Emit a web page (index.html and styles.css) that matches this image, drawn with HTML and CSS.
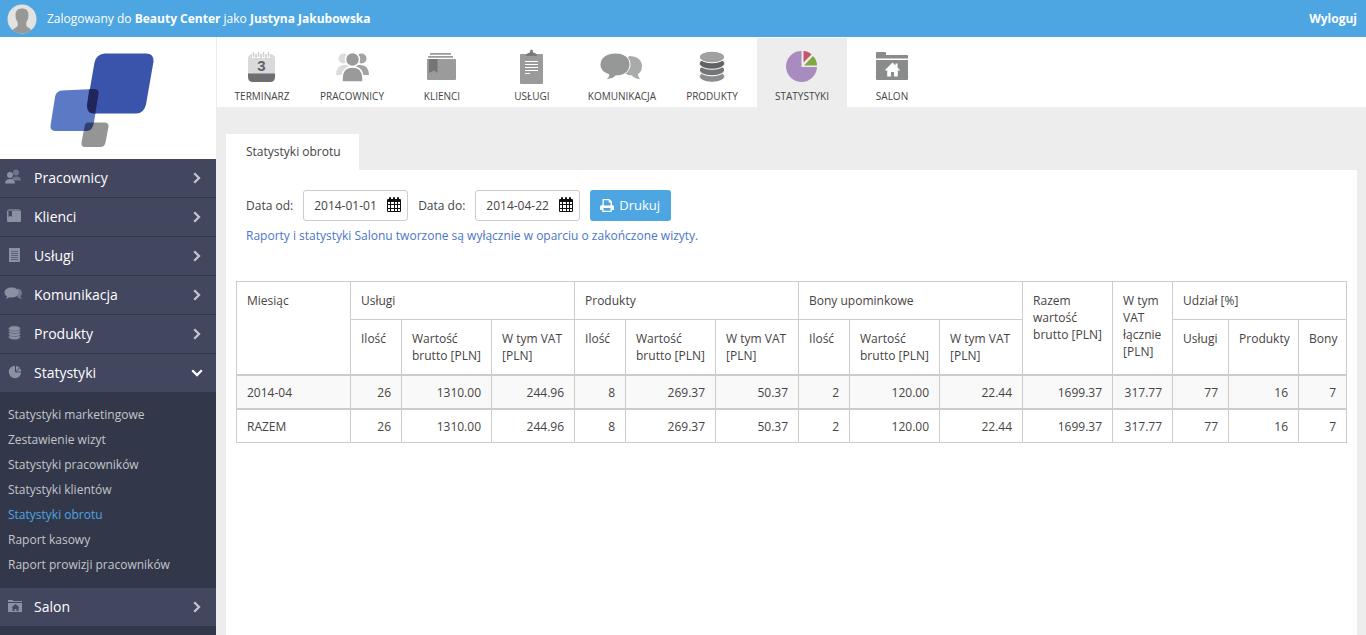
FILE: index.html
```html
<!DOCTYPE html>
<html lang="pl">
<head>
<meta charset="utf-8">
<title>Statystyki obrotu</title>
<link rel="stylesheet" href="styles.css">
</head>
<body>
<svg class="defs" aria-hidden="true">
  <symbol id="chev" viewBox="0 0 8 12"><path d="M1.2 1.2L6 6l-4.800 4.800" fill="none" stroke="currentColor" stroke-width="2.300"/></symbol>
  <symbol id="calendar" viewBox="0 0 14 15">
    <path fill="#111" d="M1 2h1v-1q0-1 1-1t1 1v1h2v-1q0-1 1-1t1 1v1h2v-1q0-1 1-1t1 1v1h1q1 0 1 1v11q0 1-1 1H1q-1 0-1-1V3q0-1 1-1z"/>
    <path fill="#fff" shape-rendering="crispEdges" d="M1 5h2v2H1zM4 5h3v2H4zM8 5h2v2H8zM11 5h2v2h-2zM1 8h2v3H1zM4 8h3v3H4zM8 8h2v3H8zM11 8h2v3h-2zM1 12h2v2H1zM4 12h3v2H4zM8 12h2v2H8zM11 12h2v2h-2z"/>
  </symbol>
</svg>

<header class="topbar">
  <svg class="avatar" viewBox="0 0 30 30" aria-hidden="true">
    <circle cx="15" cy="15" r="14.500" fill="#e2e2e0"/>
    <path fill="#989896" d="M15 4.500c4 0 6.500 2 6.500 6.500 0 3-.6 5-2.200 7v3.500c0 1.500 3 2.200 5.200 4.400A14.500 14.500 0 0 1 5.500 25.900c2.200-2.200 5.200-2.900 5.200-4.400V18c-1.600-2-2.200-4-2.200-7 0-4.500 2.500-6.500 6.500-6.500z"/>
  </svg>
  <p class="who">Zalogowany do <b>Beauty Center</b> jako <b>Justyna Jakubowska</b></p>
  <a class="logout" href="#">Wyloguj</a>
</header>

<div class="layout">
  <aside class="sidebar">
    <a class="logo" href="#" aria-label="Strona główna">
      <svg class="logo-mark" viewBox="0 0 104 96" aria-hidden="true">
        <path fill="#5c79c6" d="M12 37.500l32-1.500q5 0 4.500 5l-5 31q-1.500 6-7 6H6q-6 0-5.500-5L5 44q1-6 7-6.500z"/>
        <path fill="#3a54ab" d="M55 .5h41q8 0 7.500 8l-7.500 43q-2 9-10 9H44q-7 0-7-8l7.500-43Q46.500 1 55 .5z"/>
        <path fill="#20255c" d="M39.300 36.200L44 36q5 0 4.500 5l-3.200 19.500H44q-7 0-7-8z"/>
        <path fill="#959595" d="M38 69.500h16q5 0 4.500 4l-3 16q-1 4.500-5 4.500H35q-4 0-3.500-4.500l3-16q.7-4 3.500-4z"/>
        <path fill="#2e3f70" d="M38 69.500h6q-1.500 8.500-7.500 8.500h-2.700l.7-4.500q.7-4 3.500-4z"/>
      </svg>
    </a>
    <nav class="menu" aria-label="Menu boczne">
      <a class="menu-item" href="#">
        <svg class="menu-icon" viewBox="0 0 20 16"><g fill="#6f748a"><circle cx="14" cy="3.500" r="3"/><path d="M10 11.500q0-4 4.500-4 4.300 0 4.500 4z"/></g><g fill="#8b90a3"><circle cx="8" cy="6" r="3"/><path d="M3 14.500q.2-4.500 5-4.500t5 4.500z"/></g></svg>
        <span class="menu-label">Pracownicy</span><svg class="chev"><use href="#chev"/></svg></a>
      <a class="menu-item" href="#">
        <svg class="menu-icon" viewBox="0 0 20 16"><path fill="#6f748a" d="M5 2.500L7 1h10l2 1.500V4H5z"/><path fill="#8b90a3" d="M5 3h13q1 0 1 1v9q0 1-1 1H6q-1 0-1-1z"/><path fill="#42465e" d="M6.500 3H10v6L8.300 7.800 6.500 9z"/></svg>
        <span class="menu-label">Klienci</span><svg class="chev"><use href="#chev"/></svg></a>
      <a class="menu-item" href="#">
        <svg class="menu-icon" viewBox="0 0 20 16"><path fill="#8b90a3" d="M7 1h11v14H7z"/><path stroke="#5d627a" d="M9 4.500h7M9 6.500h7M9 8.500h7M9 10.500h7M9 12.500h7"/></svg>
        <span class="menu-label">Usługi</span><svg class="chev"><use href="#chev"/></svg></a>
      <a class="menu-item" href="#">
        <svg class="menu-icon" viewBox="0 0 20 16"><path fill="#747990" d="M15 2.500q5 .5 5 4.500 0 2-1.500 3.300l1.200 2.700-4-1.500z"/><path fill="#8b90a3" d="M9.500 1.500c4 0 7 2 7 5s-3 5-7 5l-2-.2L4 13l1-2.500C3.500 9.500 2.500 8 2.500 6.500c0-3 3-5 7-5z"/></svg>
        <span class="menu-label">Komunikacja</span><svg class="chev"><use href="#chev"/></svg></a>
      <a class="menu-item" href="#">
        <svg class="menu-icon" viewBox="0 0 20 16"><g fill="#8b90a3" stroke="#5d627a" stroke-width=".7"><ellipse cx="12.500" cy="12" rx="5.800" ry="2.600"/><ellipse cx="12.500" cy="9" rx="5.800" ry="2.600"/><ellipse cx="12.500" cy="6" rx="5.800" ry="2.600"/><ellipse cx="12.500" cy="3.500" rx="5.800" ry="2.600"/></g></svg>
        <span class="menu-label">Produkty</span><svg class="chev"><use href="#chev"/></svg></a>
      <a class="menu-item open" href="#" aria-expanded="true">
        <svg class="menu-icon" viewBox="0 0 20 16"><circle cx="13" cy="8" r="6.200" fill="#8b90a3"/><path stroke="#42465e" fill="none" d="M13.500 1v7H20M13.500 8L18 3.500"/></svg>
        <span class="menu-label">Statystyki</span><svg class="chev"><use href="#chev"/></svg></a>
      <ul class="submenu">
        <li><a href="#">Statystyki marketingowe</a></li>
        <li><a href="#">Zestawienie wizyt</a></li>
        <li><a href="#">Statystyki pracowników</a></li>
        <li><a href="#">Statystyki klientów</a></li>
        <li><a class="current" href="#" aria-current="page">Statystyki obrotu</a></li>
        <li><a href="#">Raport kasowy</a></li>
        <li><a href="#">Raport prowizji pracowników</a></li>
      </ul>
      <a class="menu-item" href="#">
        <svg class="menu-icon" viewBox="0 0 20 16"><path fill="#8b90a3" d="M6 2h5v1h9v1H6zM6 5h14v9H6z"/><path fill="#42465e" d="M13.500 6l4 3.500h-1V13h-2v-2h-2v2h-2V9.500h-1z"/></svg>
        <span class="menu-label">Salon</span><svg class="chev"><use href="#chev"/></svg></a>
    </nav>
  </aside>

  <div class="content">
    <nav class="modules" aria-label="Moduły">
      <a class="module" href="#">
        <svg class="module-icon" viewBox="0 0 44 38"><path fill="#dadada" d="M8 11q0-5 5-5h17q5 0 5 5v15H8z"/><path fill="#6d6f71" d="M8 25.500h27V29q0 5-5 5H13q-5 0-5-5z"/><path stroke="#fff" stroke-width="3" d="M13.500 4v6M18.500 4v6M23.500 4v6M28.500 4v6"/><path stroke="#d0d0d0" stroke-width="1.500" stroke-linecap="round" d="M13.500 4.500v4M18.500 4.500v4M23.500 4.500v4M28.500 4.500v4"/><text class="day" x="21.500" y="23" text-anchor="middle">3</text></svg>
        <span>TERMINARZ</span></a>
      <a class="module" href="#">
        <svg class="module-icon" viewBox="0 0 44 38"><g fill="#dcdcdc"><circle cx="13.500" cy="10.500" r="5"/><path d="M6 27q.5-10 7.500-10h5v10z"/></g><g fill="#a3a3a3"><circle cx="31.500" cy="10.500" r="5"/><path d="M39 27q-.5-10-8-10h-5v10z"/></g><g fill="#999b9a" stroke="#fff" stroke-width="1.500"><path d="M12 34v-3q0-12 10.500-12T33 31v3z"/><circle cx="22.500" cy="11.500" r="7"/></g></svg>
        <span>PRACOWNICY</span></a>
      <a class="module" href="#">
        <svg class="module-icon" viewBox="0 0 44 38"><path fill="#9b9b9b" d="M10 5h21v1.700H10zM8 8h25v1.800H8zM7 11h28q1 0 1 1v19q0 1-1 1H8q-1 0-1-1z"/><path fill="#737577" d="M9 11h8.500v14L14 22.500 9 25z"/></svg>
        <span>KLIENCI</span></a>
      <a class="module" href="#">
        <svg class="module-icon" viewBox="0 0 44 38"><rect x="10" y="6" width="23" height="30" rx="1" fill="#9a9a9a"/><path fill="#77797b" d="M16 8q0-3 4-3.500 0-3 1.500-3T23 4.500q4 .5 4 3.500z"/><path stroke="#fff" d="M15 13.500h13M15 16.500h13M15 19.500h13M15 22.500h13M15 25.500h5"/></svg>
        <span>USŁUGI</span></a>
      <a class="module" href="#">
        <svg class="module-icon" viewBox="0 0 44 38"><path fill="#a9abaa" d="M29 8c8 0 13 4 13 10 0 4-1.500 6.500-4 8 0 2 .7 3.500 2 5-4 0-6-1.500-8-3.500-5 0-9-3-10-7z"/><path fill="#959897" stroke="#fff" stroke-width="1" d="M15.500 5C24 5 30 9.500 30 16.500S24 28 15.500 28c-2 2-4 3.300-9.500 3.300 2-1.500 2.800-3 2.800-4.800C3 24.500 0 21 0 16.500 0 9.500 7 5 15.500 5z"/></svg>
        <span>KOMUNIKACJA</span></a>
      <a class="module" href="#">
        <svg class="module-icon" viewBox="0 0 44 38"><g stroke="#fff" stroke-width="1"><ellipse cx="22" cy="28.500" rx="12.700" ry="5.800" fill="#8c8c8c"/><ellipse cx="22" cy="22" rx="12.700" ry="5.800" fill="#737577"/><ellipse cx="22" cy="15.500" rx="12.700" ry="5.800" fill="#606264"/><ellipse cx="22" cy="9" rx="12.700" ry="5.800" fill="#a0a0a0"/></g></svg>
        <span>PRODUKTY</span></a>
      <a class="module active" href="#" aria-current="page">
        <svg class="module-icon" viewBox="0 0 44 38"><path fill="#a98cbf" d="M21.500 3v16H37A15.500 15.500 0 1 1 21.500 3z"/><path fill="#c05a6b" d="M23.500 3q5 .3 8 3.500l-8 8z"/><path fill="#7fa93f" d="M33 8q4 4 4 9.500H24z"/></svg>
        <span>STATYSTYKI</span></a>
      <a class="module" href="#">
        <svg class="module-icon" viewBox="0 0 44 38"><path fill="#8a8c8b" d="M6 5q0-1 1-1h8q1 0 1 1v2h21q1 0 1 1v2.500H6zM6 12h32v19q0 1-1 1H7q-1 0-1-1z"/><path fill="#fff" d="M22.500 14.500l3 3v-2h2v4l2.500 2.500-1 1-1.200-1v6.500H24V24h-3v4.500h-3.800V22L16 23l-1-1z"/></svg>
        <span>SALON</span></a>
    </nav>

    <main class="main">
      <h1 class="tab">Statystyki obrotu</h1>
      <section class="panel">
        <form class="filters">
          <label for="from">Data od:</label>
          <div class="date"><input id="from" type="text" value="2014-01-01"><button class="pick" type="button" aria-label="Wybierz datę początkową"><svg><use href="#calendar"/></svg></button></div>
          <label for="to">Data do:</label>
          <div class="date"><input id="to" type="text" value="2014-04-22"><button class="pick" type="button" aria-label="Wybierz datę końcową"><svg><use href="#calendar"/></svg></button></div>
          <button class="print" type="button"><svg viewBox="0 0 14 13" aria-hidden="true"><path fill="#fff" fill-rule="evenodd" d="M2.500 0h7L12 2.500V6q2 0 2 2v3h-2.200v2H2.200v-2H0V8q0-2 2.500-2zM3.800 1.300V6.500h6.700V3.500H8.700V1.300zM3.500 9v2.700h7V9z"/></svg>Drukuj</button>
        </form>
        <p class="note">Raporty i statystyki Salonu tworzone są wyłącznie w oparciu o zakończone wizyty.</p>

        <table class="report">
          <colgroup><col class="c-month"><col class="c-qty"><col class="c-gross"><col class="c-vat"><col class="c-qty"><col class="c-gross"><col class="c-vat"><col class="c-qty"><col class="c-gross"><col class="c-vat"><col class="c-gross"><col class="c-total-vat"><col class="c-services"><col class="c-products"><col></colgroup>
          <thead>
            <tr><th rowspan="2">Miesiąc</th><th colspan="3">Usługi</th><th colspan="3">Produkty</th><th colspan="3">Bony upominkowe</th><th rowspan="2">Razem wartość brutto [PLN]</th><th rowspan="2">W tym VAT łącznie [PLN]</th><th colspan="3">Udział [%]</th></tr>
            <tr><th>Ilość</th><th>Wartość brutto [PLN]</th><th>W tym VAT [PLN]</th><th>Ilość</th><th>Wartość brutto [PLN]</th><th>W tym VAT [PLN]</th><th>Ilość</th><th>Wartość brutto [PLN]</th><th>W tym VAT [PLN]</th><th>Usługi</th><th>Produkty</th><th>Bony</th></tr>
          </thead>
          <tbody>
            <tr class="odd"><td>2014-04</td><td>26</td><td>1310.00</td><td>244.96</td><td>8</td><td>269.37</td><td>50.37</td><td>2</td><td>120.00</td><td>22.44</td><td>1699.37</td><td>317.77</td><td>77</td><td>16</td><td>7</td></tr>
          </tbody>
          <tfoot>
            <tr><td>RAZEM</td><td>26</td><td>1310.00</td><td>244.96</td><td>8</td><td>269.37</td><td>50.37</td><td>2</td><td>120.00</td><td>22.44</td><td>1699.37</td><td>317.77</td><td>77</td><td>16</td><td>7</td></tr>
          </tfoot>
        </table>
      </section>
    </main>
  </div>
</div>
</body>
</html>
```
FILE: styles.css
```css
* { box-sizing: border-box; }
body {
  margin: 0;
  min-height: 100vh;
  display: flex;
  flex-direction: column;
  background: #ededed;
  color: #444;
  font: 12px/17px "Open Sans", sans-serif;
}
a { color: inherit; text-decoration: none; }
button, input { font: inherit; color: inherit; }
svg { display: block; }
.defs { position: absolute; width: 0; height: 0; }

.topbar {
  display: flex;
  align-items: center;
  gap: 10px;
  height: 37px;
  padding: 0 9px 0 7px;
  background: #4da6e2;
  color: #fff;
}
.avatar { width: 30px; height: 30px; }
.who { margin: 0; flex: 1; }
.logout { font-weight: 700; }

.layout { display: flex; flex: 1; }
.sidebar { width: 216px; flex: none; background: #323749; }
.logo {
  display: flex;
  height: 122px;
  padding: 16px 0 0 50px;
  background: #fff;
}
.logo-mark { width: 104px; height: 96px; }
.menu-item {
  display: flex;
  align-items: center;
  height: 39px;
  padding: 0 15px 0 2px;
  border-bottom: 1px solid #32364a;
  background: #42465e;
  color: #fff;
  font-size: 14px;
}
.menu-icon { width: 20px; height: 16px; margin: 0 12px 2px 0; }
.menu-label { flex: 1; padding-bottom: 2px; }
.chev { width: 8px; height: 12px; color: #c3c6d0; }
.open .chev { color: #fff; transform: rotate(90deg); }
.submenu {
  margin: 0;
  padding: 9px 8px 11px;
  list-style: none;
  line-height: 25px;
  color: #c4c6cc;
}
.submenu .current { color: #4da6e2; }

.content { flex: 1; min-width: 0; display: flex; flex-direction: column; }
.modules {
  display: flex;
  height: 70px;
  padding-top: 1px;
  border-left: 1px solid #ededed;
  background: #fff;
}
.module {
  display: flex;
  flex-direction: column;
  align-items: center;
  gap: 2px;
  width: 90px;
  padding-top: 10px;
  font-size: 10px;
}
.module.active { background: #ededed; }
.module-icon { width: 44px; height: 38px; }
.day { font: 700 15px "Liberation Sans", sans-serif; fill: #606264; }

.main {
  flex: 1;
  display: flex;
  flex-direction: column;
  align-items: flex-start;
  padding: 27px 9px 0 10px;
}
.tab {
  margin: 0;
  padding: 9px 18px 10px 20px;
  background: #fff;
  font-size: 12px;
  font-weight: 400;
}
.panel { flex: 1; align-self: stretch; padding: 20px 10px; background: #fff; }
.filters { display: flex; align-items: center; gap: 10px; padding-left: 10px; }
.date {
  display: flex;
  align-items: center;
  width: 105px;
  height: 31px;
  padding: 0 6px 0 10px;
  border: 1px solid #ccc;
  border-radius: 3px;
}
.date input { flex: 1; min-width: 0; padding: 0; border: 0; background: none; }
.pick { padding: 0 0 2px; border: 0; background: none; }
.pick svg { width: 14px; height: 15px; }
.print {
  display: flex;
  align-items: center;
  gap: 5px;
  height: 31px;
  padding: 0 11px 0 10px;
  border: 0;
  border-radius: 3px;
  background: #4da6e2;
  color: #fff;
  font-size: 13px;
}
.print svg { width: 14px; height: 13px; }
.note { margin: 6px 10px 37px; color: #4b76c8; }

.report { width: 100%; table-layout: fixed; border-collapse: collapse; }
.report th, .report td { border: 1px solid #ccc; padding: 10px; vertical-align: top; }
.report th { padding-right: 6px; font-weight: 400; text-align: left; }
.report td { padding: 8px 10px 7px; text-align: right; border-top: 2px solid #ccc; }
.report td:first-child { text-align: left; }
.odd { background: #f9f9f9; }
.c-month { width: 114px; }
.c-qty { width: 51px; }
.c-gross { width: 90px; }
.c-vat { width: 83px; }
.c-total-vat { width: 60px; }
.c-services { width: 56px; }
.c-products { width: 70px; }
```
